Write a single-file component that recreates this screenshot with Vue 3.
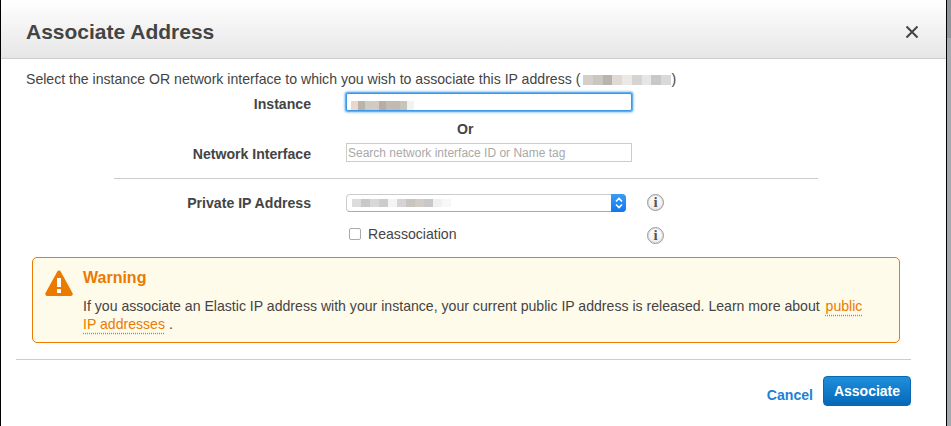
<script setup>
const ipPixels = ["#d4cfca", "#c9c5c1", "#b9b3b0", "#dfdad6", "#ece8e3", "#d6d4d2", "#e6e6e4", "#c8c8c6", "#d9d9d9"];
const instancePixels = ["#e8d8cc", "#b9b3ac", "#cdccc4", "#d2cbc2", "#b8aca6", "#c0bcb4", "#c0bab2", "#c8c4ba", "#f2f3ef"];
const privatePixels = ["#dcdcdc", "#c8c8c8", "#d8d8d8", "#cccccc", "#f4f4f4", "#d4d4d4", "#c8c4c0", "#d0ccc8", "#c8c8c8", "#f0f0f0", "#f8f8f8"];
</script>

<template>
    <div class="page">
        <div class="modal">
            <div class="modal-header">
                <h1>Associate Address</h1>
                <svg class="close" width="14" height="14" viewBox="0 0 14 14">
                    <path d="M1.5 1.5 L12.5 12.5 M12.5 1.5 L1.5 12.5" stroke="#444" stroke-width="2" fill="none" />
                </svg>
            </div>

            <p class="intro">
                Select the instance OR network interface to which you wish to associate this IP address
                (<span class="blur ip"><i v-for="(c, i) in ipPixels" :key="i" :style="{ background: c }"></i></span>)
            </p>

            <div class="row first">
                <label>Instance</label>
                <div class="fake-input focused">
                    <span class="blur inst"><i v-for="(c, i) in instancePixels" :key="i" :style="{ background: c }"></i></span>
                </div>
            </div>

            <div class="or">Or</div>

            <div class="row search-row">
                <label>Network Interface</label>
                <input class="search" type="text" placeholder="Search network interface ID or Name tag" />
            </div>

            <hr class="divider" />

            <div class="row select-row">
                <label>Private IP Address</label>
                <div class="fake-select">
                    <span class="blur priv"><i v-for="(c, i) in privatePixels" :key="i" :style="{ background: c }"></i></span>
                    <span class="select-arrows">
                        <svg width="8" height="12" viewBox="0 0 8 12">
                            <path d="M1 4.5 L4 1.5 L7 4.5 M1 7.5 L4 10.5 L7 7.5" stroke="#fff" stroke-width="1.6" fill="none" />
                        </svg>
                    </span>
                </div>
                <span class="info">i</span>
            </div>

            <div class="row check-row">
                <span></span>
                <div class="check"><span class="box"></span>Reassociation</div>
                <span class="info">i</span>
            </div>

            <div class="warning">
                <svg class="warn-icon" width="28" height="26" viewBox="0 0 28 26">
                    <path d="M14 0.5 C14.8 0.5 15.4 1 15.8 1.7 L27.5 23 C28.2 24.4 27.4 26 25.8 26 L2.2 26 C0.6 26 -0.2 24.4 0.5 23 L12.2 1.7 C12.6 1 13.2 0.5 14 0.5 Z" fill="#eb7a00" />
                    <rect x="12" y="8" width="4" height="9" fill="#fff" />
                    <rect x="12" y="19" width="4" height="4" fill="#fff" />
                </svg>
                <div class="warn-body">
                    <h2>Warning</h2>
                    <p>
                        If you associate an Elastic IP address with your instance, your current public IP address is released. Learn more about
                        <a class="first-part">public</a><br /><a>IP addresses</a> .
                    </p>
                </div>
            </div>

            <hr class="footer-line" />

            <div class="footer">
                <a class="cancel">Cancel</a>
                <button class="primary" type="button">Associate</button>
            </div>
        </div>
        <div class="backdrop"></div>
    </div>
</template>

<style scoped>
.page {
    display: flex;
    height: 426px;
    width: 951px;
    overflow: hidden;
    font-family: "Liberation Sans", Arial, sans-serif;
    font-size: 14.1px;
    color: #444;
}

.modal {
    width: 945px;
    flex-shrink: 0;
    background: #fff;
    border-left: 1px solid #000;
    border-right: 1px solid #000;
}

.backdrop {
    flex: 1;
    background: linear-gradient(#8f9599 0, #8f9599 38px, #a3abb0 38px);
}

.modal-header {
    height: 59px;
    box-sizing: border-box;
    display: flex;
    align-items: center;
    justify-content: space-between;
    padding: 5px 27px 0 25px;
    background: linear-gradient(#fff, #e6e6e6);
    border-bottom: 1px solid #ccc;
}

.modal-header h1 {
    margin: 0;
    font-size: 21px;
    font-weight: bold;
    color: #444;
}

.intro {
    margin: 12px 0 0 25px;
    line-height: 16px;
}

.blur {
    display: inline-flex;
    vertical-align: middle;
}

.blur i {
    display: block;
    height: 100%;
}

.ip {
    height: 10px;
    margin: -1px 1px 0 3px;
}

.ip i {
    width: 9.7px;
}

.row {
    display: grid;
    grid-template-columns: 310px auto 1fr;
    align-items: start;
    column-gap: 35px;
}

.row > label {
    margin-top: 3px;
    line-height: 16px;
    text-align: right;
    font-weight: bold;
}

.first {
    margin-top: 6px;
}

.fake-input {
    width: 286px;
    height: 18px;
    box-sizing: border-box;
    background: #fff;
}

.focused {
    border: 1px solid #3d98ea;
    border-radius: 2px;
    box-shadow: 0 0 0 1px #62b0f3, 0 0 2px 2px #a8d4f8;
    padding: 2px 4px;
}

.inst {
    height: 9px;
    margin-top: 1px;
}

.inst i {
    width: 7px;
}

.or {
    margin: 9px 0 0;
    padding-left: 456px;
    font-weight: bold;
    line-height: 16px;
}

.search-row {
    margin-top: 6px;
}

.search {
    width: 286px;
    height: 19px;
    box-sizing: border-box;
    border: 1px solid #ccc;
    padding: 0 1px;
    margin: 0;
    font-family: inherit;
    font-size: 12px;
    outline: none;
}

.search::placeholder {
    color: #a9a9a9;
    opacity: 1;
}

.divider {
    margin: 16px 0 0 113px;
    width: 704px;
    border: 0;
    border-top: 1px solid #ccc;
}

.select-row {
    margin-top: 15px;
}

.row.select-row > label {
    margin-top: 1px;
}

.fake-select {
    width: 280px;
    height: 18px;
    box-sizing: border-box;
    display: flex;
    align-items: center;
    justify-content: space-between;
    border: 1px solid #ccc;
    border-bottom-color: #aaa;
    border-right: 0;
    border-radius: 4px;
    padding-left: 5px;
    background: #fff;
}

.priv {
    height: 8px;
}

.priv i {
    width: 9px;
}

.select-arrows {
    width: 15px;
    height: 18px;
    margin: -1px 0;
    display: flex;
    align-items: center;
    justify-content: center;
    background: linear-gradient(#3a9bf8, #0f78f0);
    border-radius: 0 4px 4px 0;
}

.info {
    width: 15px;
    height: 15px;
    margin-left: -14px;
    display: flex;
    align-items: center;
    justify-content: center;
    border: 1px solid #999;
    border-radius: 50%;
    box-shadow: inset 0 0 0 1px #ddd;
    font-family: "Liberation Serif", serif;
    font-size: 15px;
    font-weight: bold;
    color: #555;
    background: linear-gradient(#fff, #ececec);
}

.check-row {
    margin-top: 14px;
    grid-template-columns: 310px 280px 1fr;
}

.check-row .info {
    margin-top: 1px;
}

.check {
    display: flex;
    align-items: center;
    line-height: 16px;
    padding-left: 3px;
}

.box {
    width: 10px;
    height: 10px;
    margin-right: 7px;
    border: 1px solid #aaa;
    border-radius: 2px;
    background: #fff;
}

.warning {
    display: flex;
    margin: 13px 0 0 31px;
    width: 868px;
    height: 86px;
    box-sizing: border-box;
    border: 1px solid #eb7a00;
    border-radius: 5px;
    background: #fffbeb;
    padding: 12px 20px 0 12px;
}

.warn-icon {
    flex-shrink: 0;
    margin: 0 10px 0 0;
}

.warn-body h2 {
    margin: 0;
    font-size: 16px;
    line-height: 16px;
    font-weight: bold;
    color: #eb7a00;
}

.warn-body p {
    margin: 11px 0 0;
    line-height: 18px;
    color: #444;
}

.warn-body a {
    color: #eb7a00;
    text-decoration: underline dotted #eb7a00;
    text-underline-offset: 4px;
}

.warn-body .first-part {
    margin-left: 2px;
}

.footer-line {
    margin: 16px 0 0 15px;
    width: 895px;
    border: 0;
    border-top: 1px solid #ccc;
}

.footer {
    display: flex;
    justify-content: flex-end;
    align-items: center;
    gap: 10px;
    margin: 16px 35px 0 0;
}

.cancel {
    color: #1a83d6;
    font-weight: bold;
    margin-top: 8px;
}

.primary {
    width: 88px;
    height: 30px;
    padding: 0;
    border: 1px solid #0a68b0;
    border-radius: 4px;
    background: linear-gradient(#1f8fdb, #0568b8);
    color: #fff;
    font-family: inherit;
    font-size: 14px;
    font-weight: bold;
}
</style>

<style>
body {
    margin: 0;
}
</style>
